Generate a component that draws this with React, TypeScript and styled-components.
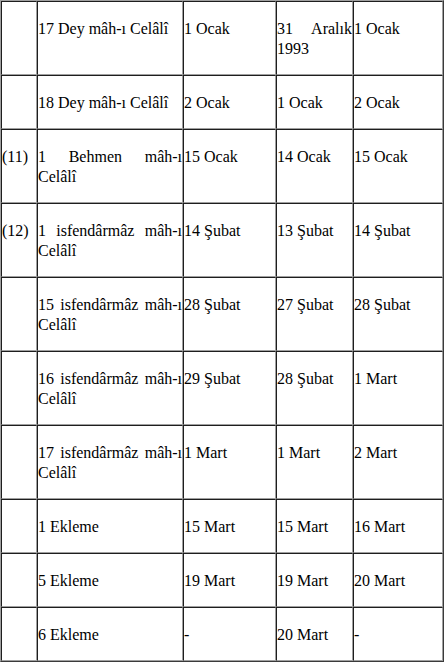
import styled, { createGlobalStyle } from 'styled-components'

const GlobalStyle = createGlobalStyle`
  html,
  body {
    margin: 0;
    padding: 0;
    background: #fff;
  }

  body {
    font-family: "Liberation Serif", "Times New Roman", serif;
    font-size: 16px;
    color: #000;
  }
`

const columnWidths = [36, 146, 93, 77, 90]

const rows: string[][] = [
  ['', '17 Dey mâh-ı Celâlî', '1 Ocak', '31 Aralık 1993', '1 Ocak'],
  ['', '18 Dey mâh-ı Celâlî', '2 Ocak', '1 Ocak', '2 Ocak'],
  ['(11)', '1 Behmen mâh-ı Celâlî', '15 Ocak', '14 Ocak', '15 Ocak'],
  ['(12)', '1 isfendârmâz mâh-ı Celâlî', '14 Şubat', '13 Şubat', '14 Şubat'],
  ['', '15 isfendârmâz mâh-ı Celâlî', '28 Şubat', '27 Şubat', '28 Şubat'],
  ['', '16 isfendârmâz mâh-ı Celâlî', '29 Şubat', '28 Şubat', '1 Mart'],
  ['', '17 isfendârmâz mâh-ı Celâlî', '1 Mart', '1 Mart', '2 Mart'],
  ['', '1 Ekleme', '15 Mart', '15 Mart', '16 Mart'],
  ['', '5 Ekleme', '19 Mart', '19 Mart', '20 Mart'],
  ['', '6 Ekleme', '-', '20 Mart', '-'],
]

const DateTable = styled.table`
  width: 444px;
  table-layout: fixed;
  border-collapse: separate;
  border-spacing: 0;
  border-style: solid;
  border-width: 1px;
  border-color: #a0a0a0 #3a3a3a #3a3a3a #a0a0a0;
  font-family: "Liberation Serif", "Times New Roman", serif;
  font-size: 16px;
`

const Col = styled.col<{ $width: number }>`
  width: ${(p) => p.$width}px;
`

const Cell = styled.td`
  box-sizing: border-box;
  vertical-align: top;
  padding: 0;
  border-style: solid;
  border-width: 1px;
  border-color: #1e1e1e #a0a0a0 #a0a0a0 #1e1e1e;
`

const CellText = styled.p`
  margin: 16px 0;
  padding-top: 1px;
  margin-bottom: 15px;
  font-family: "Liberation Serif", "Times New Roman", serif;
  line-height: 20px;
  text-align: justify;
`

export default function App() {
  return (
    <>
      <GlobalStyle />
      <DateTable>
        <colgroup>
          {columnWidths.map((w, i) => (
            <Col key={i} $width={w} />
          ))}
        </colgroup>
        <tbody>
          {rows.map((row, r) => (
            <tr key={r}>
              {row.map((text, c) => (
                <Cell key={c}>
                  <CellText>{text || '\u00a0'}</CellText>
                </Cell>
              ))}
            </tr>
          ))}
        </tbody>
      </DateTable>
    </>
  )
}
